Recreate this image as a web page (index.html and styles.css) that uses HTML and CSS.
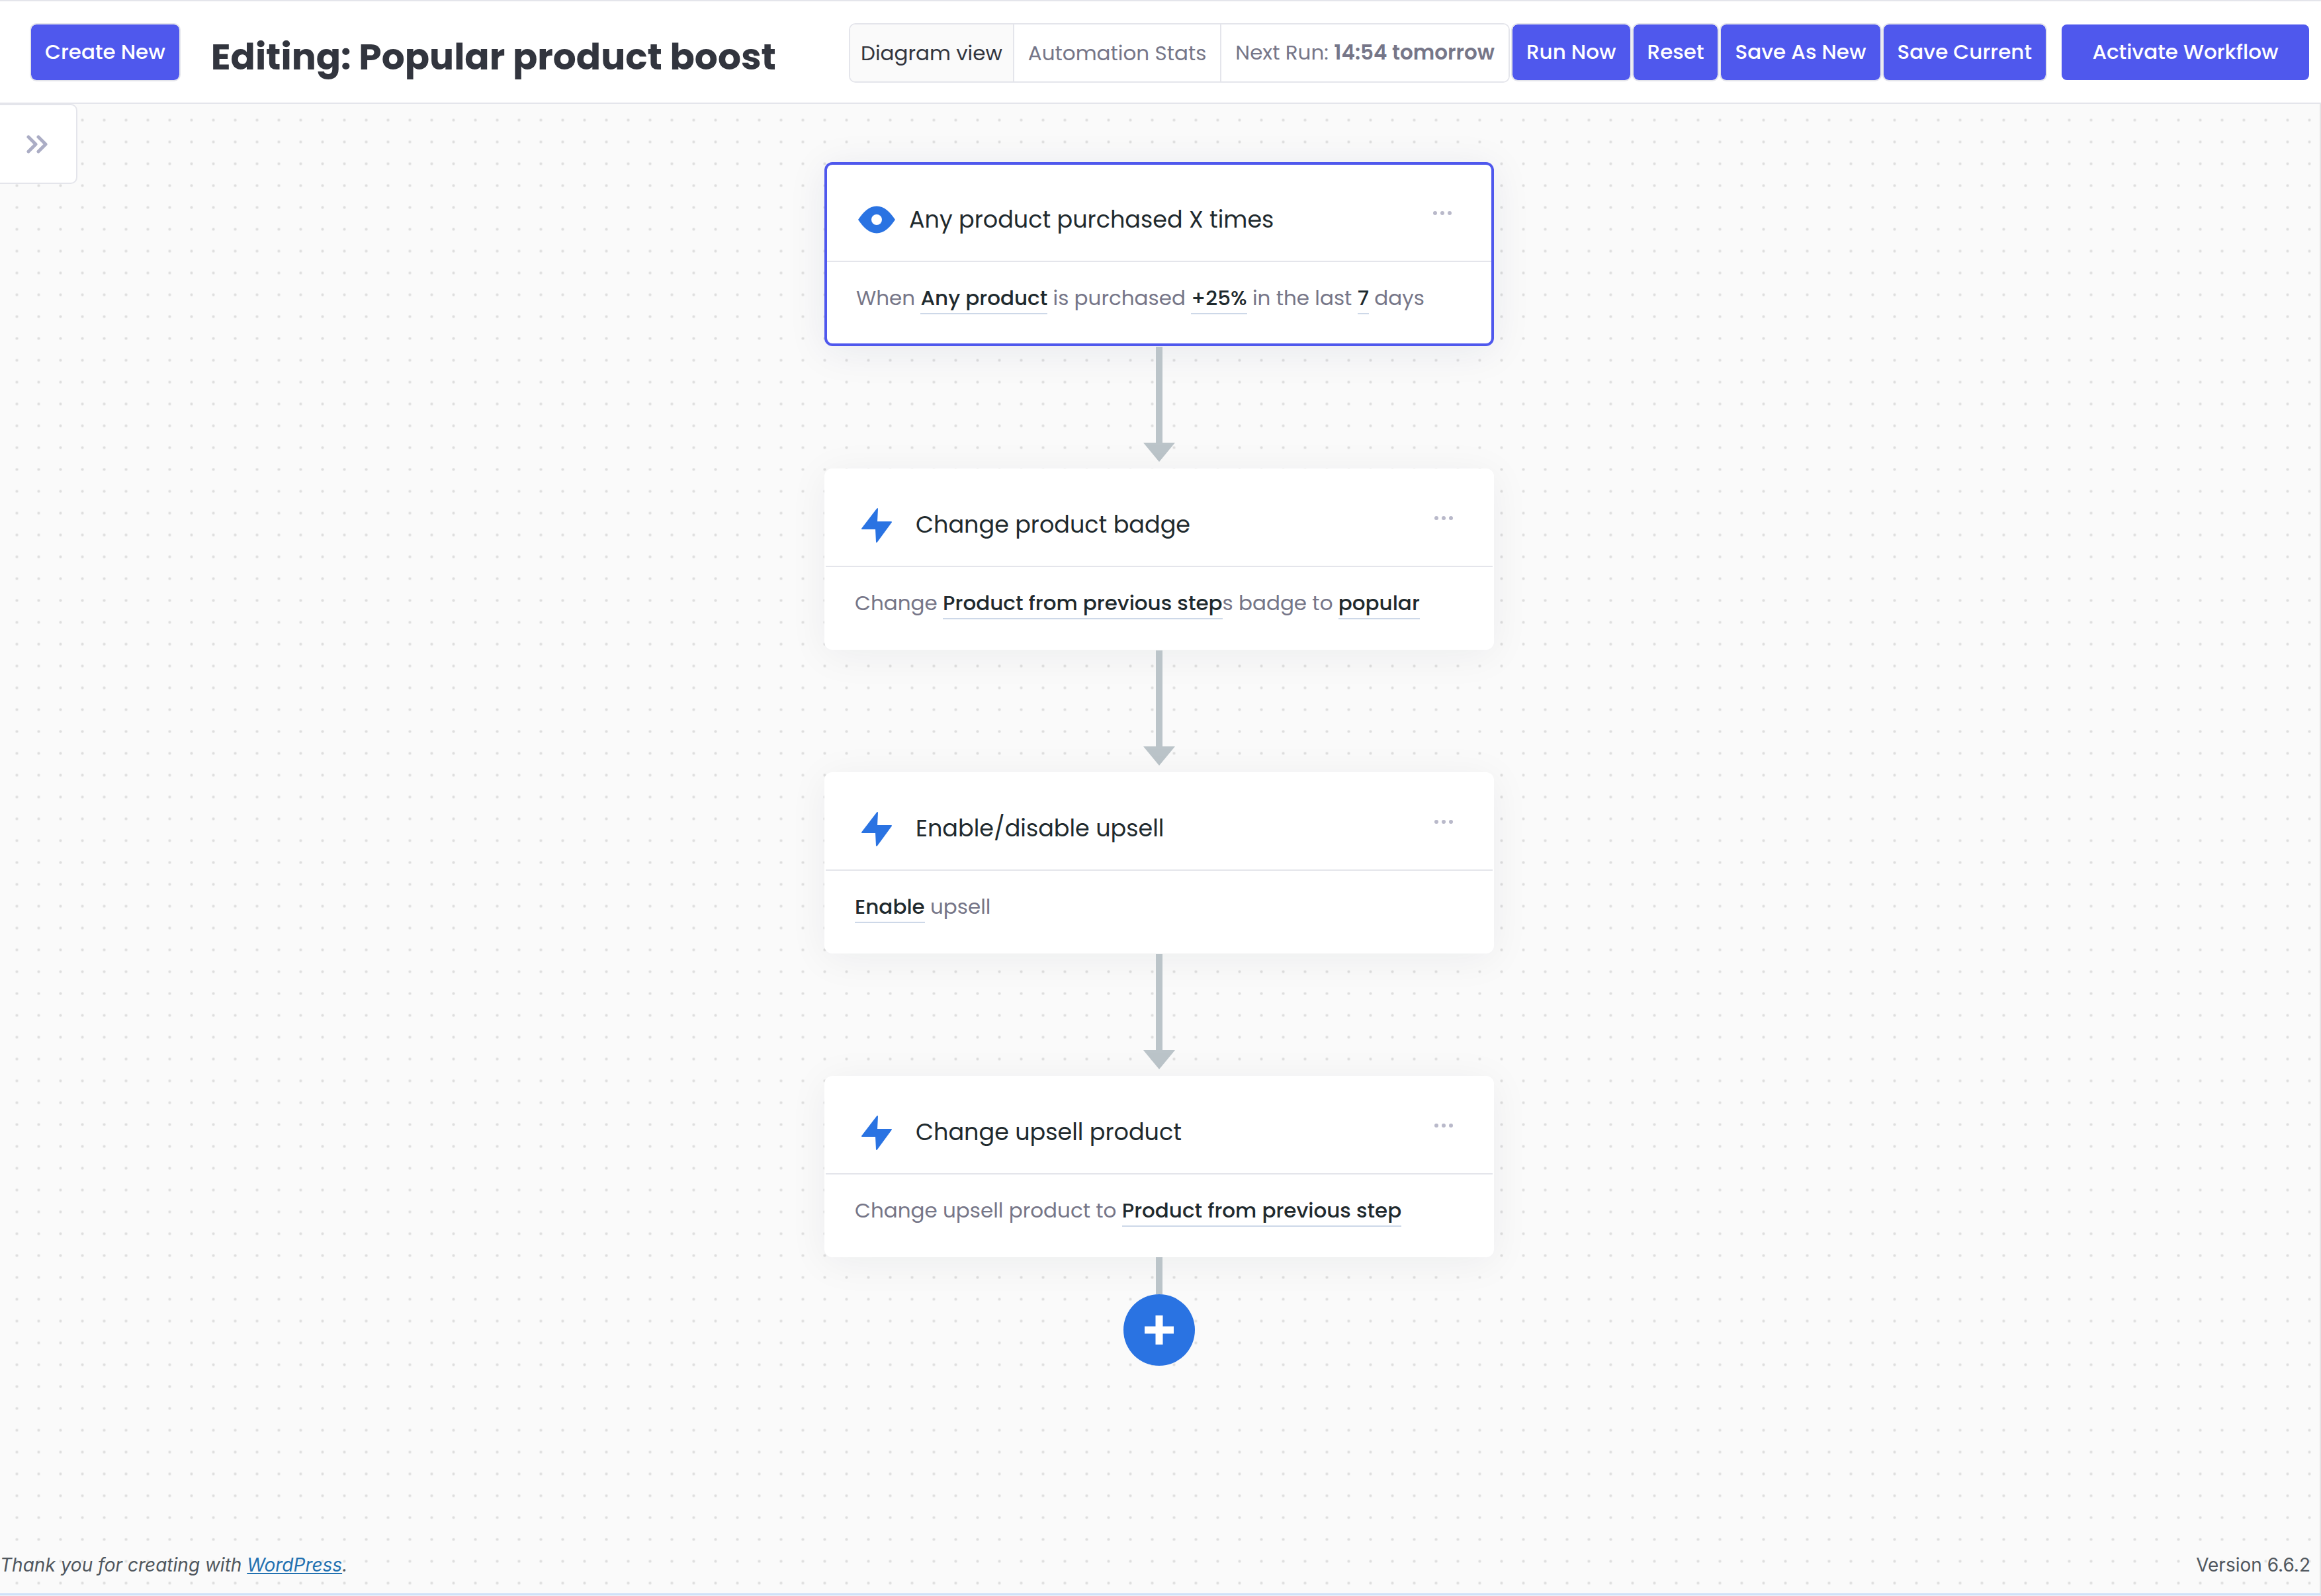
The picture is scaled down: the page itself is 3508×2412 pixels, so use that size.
FILE: index.html
```html
<!DOCTYPE html>
<html lang="en">
<head>
<meta charset="utf-8">
<title>Editing: Popular product boost</title>
<link rel="stylesheet" href="styles.css">
</head>
<body>
<header class="topbar">
  <button class="btn" type="button">Create New</button>
  <h1 class="topbar-title">Editing: Popular product boost</h1>
  <div class="topbar-actions">
    <div class="segments">
      <button class="segment segment-active" type="button">Diagram view</button>
      <button class="segment" type="button">Automation Stats</button>
      <div class="segment">Next Run: <strong>14:54 tomorrow</strong></div>
    </div>
    <button class="btn" type="button">Run Now</button>
    <button class="btn" type="button">Reset</button>
    <button class="btn" type="button">Save As New</button>
    <button class="btn" type="button">Save Current</button>
  </div>
  <button class="btn btn-activate" type="button">Activate Workflow</button>
</header>
<main class="canvas">
  <button class="drawer-toggle" type="button" aria-label="Open panel">
    <svg class="chevrons" viewBox="0 0 34 28"><path d="M5 3 16 14 5 25M20 3 31 14 20 25"/></svg>
  </button>
  <div class="flow">
    <section class="card card-selected">
      <div class="card-head">
        <svg class="icon icon-eye" viewBox="0 0 60 60"><path d="M3 31C11 19 20 10.500 31 10.500S51 19 59 31C51 43 42 51.500 31 51.500S11 43 3 31Z"/><circle class="pupil" cx="31" cy="31" r="8"/></svg>
        <h2 class="card-title">Any product purchased X times</h2>
        <button class="more" type="button" aria-label="More options"><i></i><i></i><i></i></button>
      </div>
      <p class="card-body">When <a class="field" href="#">Any product</a> is purchased <a class="field" href="#">+25%</a> in the last <a class="field" href="#">7</a> days</p>
    </section>
    <svg class="arrow" viewBox="0 0 48 174"><path d="M19 0H29V145H48L24 174 0 145H19Z"/></svg>
    <section class="card">
      <div class="card-head card-head-action">
        <svg class="icon" viewBox="0 0 60 60"><path d="M34 7 11 37H32L33 57 55 27H33Z"/></svg>
        <h2 class="card-title">Change product badge</h2>
        <button class="more" type="button" aria-label="More options"><i></i><i></i><i></i></button>
      </div>
      <p class="card-body">Change <a class="field" href="#">Product from previous step</a>s badge to <a class="field" href="#">popular</a></p>
    </section>
    <svg class="arrow" viewBox="0 0 48 174"><path d="M19 0H29V145H48L24 174 0 145H19Z"/></svg>
    <section class="card">
      <div class="card-head card-head-action">
        <svg class="icon" viewBox="0 0 60 60"><path d="M34 7 11 37H32L33 57 55 27H33Z"/></svg>
        <h2 class="card-title">Enable/disable upsell</h2>
        <button class="more" type="button" aria-label="More options"><i></i><i></i><i></i></button>
      </div>
      <p class="card-body"><a class="field" href="#">Enable</a> upsell</p>
    </section>
    <svg class="arrow" viewBox="0 0 48 174"><path d="M19 0H29V145H48L24 174 0 145H19Z"/></svg>
    <section class="card">
      <div class="card-head card-head-action">
        <svg class="icon" viewBox="0 0 60 60"><path d="M34 7 11 37H32L33 57 55 27H33Z"/></svg>
        <h2 class="card-title">Change upsell product</h2>
        <button class="more" type="button" aria-label="More options"><i></i><i></i><i></i></button>
      </div>
      <p class="card-body">Change upsell product to <a class="field" href="#">Product from previous step</a></p>
    </section>
    <div class="stem"></div>
    <button class="add" type="button" aria-label="Add step">
      <svg class="plus" viewBox="0 0 44 44"><path d="M22 0V44M0 22H44"/></svg>
    </button>
  </div>
  <footer class="footer">
    <p class="footer-thanks">Thank you for creating with <a class="footer-link" href="#">WordPress</a>.</p>
    <p class="footer-version">Version 6.6.2</p>
  </footer>
</main>
</body>
</html>
```
FILE: styles.css
```css
* {
  box-sizing: border-box;
}

body {
  margin: 0;
  min-height: 100vh;
  display: flex;
  flex-direction: column;
  font-family: "Poppins", "Inter", sans-serif;
  font-size: 31px;
  color: #32353e;
  background: #fafafa;
  border-bottom: 2px solid #e8eef6;
}

button {
  font: inherit;
  cursor: pointer;
}

h1, h2, p {
  margin: 0;
}

strong {
  font-weight: 600;
}

/* Top bar */

.topbar {
  display: flex;
  align-items: flex-start;
  padding: 33px 16px 20px 45px;
  background: #fff;
  border-top: 2px solid #e4e5eb;
  border-bottom: 2px solid #e4e5eb;
}

.btn {
  height: 88px;
  padding: 0 21px 2px;
  font-weight: 500;
  color: #fff;
  white-space: nowrap;
  background: #4f58ed;
  background-clip: padding-box;
  border: 2px solid #e4e5eb;
  border-radius: 10px;
}

.btn-activate {
  width: 378px;
  margin-left: 20px;
  border-color: transparent;
}

.topbar-title {
  margin-left: 46px;
  font-size: 55px;
  font-weight: 700;
  line-height: 102px;
  height: 100px;
  white-space: nowrap;
}

.topbar-actions {
  display: flex;
  align-items: flex-start;
  gap: 1px;
  margin-left: auto;
}

.segments {
  display: flex;
  margin-right: 1px;
  border: 2px solid #e4e5eb;
  border-radius: 10px;
  overflow: hidden;
}

.segment {
  height: 86px;
  padding: 0 21px;
  line-height: 84px;
  white-space: nowrap;
  color: #767688;
  background: #fff;
  border: 0;
}

.segment + .segment {
  border-left: 2px solid #e4e5eb;
}

.segment-active {
  padding: 0 16px;
  color: #32353e;
  background: #fafafa;
}

/* Canvas */

.canvas {
  flex: 1;
  display: flex;
  flex-direction: column;
  position: relative;
  padding: 88px 2px 0 0;
  background: radial-gradient(circle at center, #dedede 1px, transparent 3px) 9px 8px / 33px 33px #fafafa;
  border-right: 2px solid #e4e4e6;
  border-bottom: 2px solid #c8ddf8;
}

.drawer-toggle {
  position: absolute;
  top: 0;
  left: 0;
  width: 117px;
  height: 121px;
  display: flex;
  align-items: center;
  padding: 0 0 0 38px;
  background: #fff;
  border: 2px solid #e4e5eb;
  border-left: 0;
  border-radius: 0 10px 10px 0;
}

.chevrons {
  width: 34px;
  height: 28px;
  fill: none;
  stroke: #abadc5;
  stroke-width: 5px;
  stroke-linecap: round;
  stroke-linejoin: round;
}

.flow {
  display: flex;
  flex-direction: column;
  align-items: center;
}

.card {
  width: 1012px;
  background: #fff;
  border: 2px solid transparent;
  border-radius: 12px;
  box-shadow: 0 8px 60px rgba(22, 33, 54, 0.06);
}

.card-selected {
  border: 4px solid #4f58ed;
  box-shadow: 0 8px 60px rgba(22, 33, 84, 0.08);
}

.card-head {
  display: flex;
  align-items: flex-start;
  height: 147px;
  padding: 52px 60px 0 44px;
  border-bottom: 2px solid #e4e5eb;
}

.icon {
  width: 60px;
  height: 60px;
  fill: #2a73e2;
  stroke: #2a73e2;
  stroke-width: 2px;
  stroke-linejoin: round;
}

.icon-eye {
  stroke: none;
}

.pupil {
  fill: #fff;
}

.card-title {
  margin-left: 20px;
  font-size: 35px;
  font-weight: 400;
  line-height: 62px;
  color: #1f2a2e;
}

.card-head-action .card-title {
  margin-left: 32px;
}

.more {
  display: flex;
  gap: 5px;
  margin-left: auto;
  padding: 18px 0;
  background: none;
  border: 0;
}

.more i {
  width: 6px;
  height: 6px;
  border-radius: 3px;
  background: #b9b9ca;
}

.card-body {
  height: 123px;
  padding: 30px 44px 0;
  line-height: 48px;
  color: #767688;
}

.field {
  padding-bottom: 1px;
  font-weight: 500;
  color: #1f2a2e;
  text-decoration: none;
  border-bottom: 2px solid #cdd8e8;
}

.arrow {
  width: 48px;
  height: 174px;
  margin: 1px 0 10px;
  fill: #bbc4c9;
}

.stem {
  width: 10px;
  height: 56px;
  background: #bbc4c9;
}

.add {
  display: grid;
  place-items: center;
  width: 108px;
  height: 108px;
  padding: 0;
  background: #2a73e2;
  border: 0;
  border-radius: 50%;
}

.plus {
  width: 44px;
  height: 44px;
  stroke: #fff;
  stroke-width: 11px;
}

/* Footer */

.footer {
  display: flex;
  justify-content: space-between;
  margin-top: auto;
  padding: 0 12px 22px 0;
  font-family: "Inter", sans-serif;
  font-size: 28px;
  line-height: 42px;
  color: #50575e;
}

.footer-thanks {
  font-style: italic;
}

.footer-link {
  color: #2271b1;
}
```
